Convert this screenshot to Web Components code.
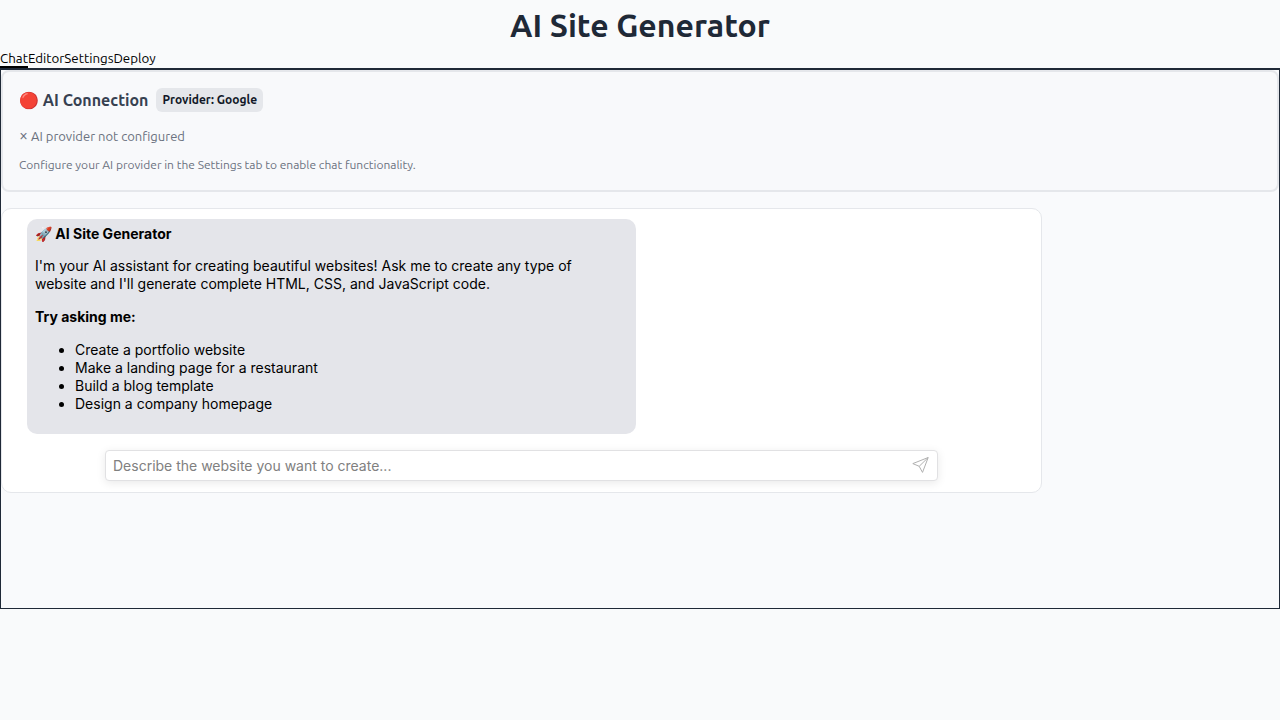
<!DOCTYPE html>
<html lang="en">
<head>
<meta charset="utf-8">
<meta name="viewport" content="width=device-width, initial-scale=1">
<title>AI Site Generator</title>
<style>
  body { margin: 0; background: #f9fafb; color: #1f2937; font-family: Ubuntu, system-ui, "Noto Sans", sans-serif; }
</style>
</head>
<body>
<site-app></site-app>
<script>
const define = (name, html, setup) => {
  const template = document.createElement('template');
  template.innerHTML = html;
  customElements.define(name, class extends HTMLElement {
    constructor() {
      super();
      this.attachShadow({ mode: 'open' }).append(template.content.cloneNode(true));
    }
    connectedCallback() { if (setup) setup(this, this.shadowRoot); }
  });
};

define('app-header', `
<style>
  :host { display: block; text-align: center; }
  h1 { margin: 0; font-size: 32px; line-height: 50px; font-weight: 600; color: #1f2937; }
</style>
<h1><slot></slot></h1>`);

define('tab-bar', `
<style>
  :host { display: block; }
  nav { display: flex; height: 18px; }
</style>
<nav role="tablist" aria-label="Sections"><slot></slot></nav>`);

define('tab-item', `
<style>
  :host { display: flex; }
  button { box-sizing: border-box; margin: 0; padding: 0; border: 0; background: none; font-family: inherit; line-height: 18px; color: #000; cursor: pointer; }
  :host([selected]) button { box-shadow: inset 0 -2px #000; }
</style>
<button type="button" role="tab"><slot></slot></button>`, (host, root) => {
  root.querySelector('button').setAttribute('aria-selected', host.hasAttribute('selected'));
});

define('connection-status', `
<style>
  :host { display: block; box-sizing: border-box; padding: 16px; border: 2px solid #e5e7eb; border-radius: 8px; background: #f8f9fb; color: #6b7280; }
  header { display: flex; align-items: center; gap: 8px; margin-bottom: 12px; }
  h2 { margin: 0; font-size: 16px; line-height: 24px; font-weight: 600; color: #374151; }
  .badge { padding: 0 6px; border-radius: 6px; background: #e5e7eb; color: #111827; font-size: 12px; line-height: 24px; font-weight: 600; }
  p { margin: 0; font-size: 13px; line-height: 24px; }
  .mark { font-size: 16px; line-height: 1; }
  .hint { margin-top: 8px; font-size: 12px; line-height: 18px; }
</style>
<header><h2>🔴 AI Connection</h2><span class="badge"><slot name="provider"></slot></span></header>
<p><span class="mark">×</span> <slot name="status"></slot></p>
<p class="hint"><slot name="hint"></slot></p>`);

define('chat-message', `
<style>
  :host { display: block; box-sizing: border-box; width: 62%; max-width: 609px; padding: 6px 24px 21px 8px; border-radius: 10px; background: #e4e5ea; color: #000; font-size: 14px; line-height: 18px; }
  p { margin: 0 0 15px; }
  p.title { margin-bottom: 14px; }
  b { font-weight: 700; }
  ul { margin: 0; padding-left: 40px; }
</style>
<p class="title"><b>🚀 AI Site Generator</b></p>
<p>I'm your AI assistant for creating beautiful websites! Ask me to create any type of website and I'll generate complete HTML, CSS, and JavaScript code.</p>
<p><b>Try asking me:</b></p>
<ul>
  <li>Create a portfolio website</li>
  <li>Make a landing page for a restaurant</li>
  <li>Build a blog template</li>
  <li>Design a company homepage</li>
</ul>`);

define('chat-input', `
<style>
  :host { display: flex; box-sizing: border-box; align-items: center; padding: 0 8px 0 7px; height: 31px; border: 1px solid #e1e1e3; border-radius: 4px; background: #fff; box-shadow: 0 2px 10px rgba(0, 0, 0, .09); }
  input { flex: 1; min-width: 0; margin: 0; padding: 0; border: 0; outline: 0; background: none; font: inherit; font-size: 14px; line-height: 18px; color: #000; }
  input::placeholder { color: #808080; opacity: 1; }
  button { display: flex; margin: 0; padding: 0; border: 0; background: none; cursor: pointer; }
  svg { display: block; width: 17px; height: 17px; fill: none; stroke: #b0b0b0; stroke-width: 1; stroke-linejoin: round; }
</style>
<input type="text" aria-label="Message" placeholder="Describe the website you want to create...">
<button type="button" aria-label="Send">
  <svg viewBox="0 0 17 17"><path d="M16.2 .5 .8 6.6l6.4 2.7L10.5 15.4zM16.2.5l-9 8.8"/></svg>
</button>`);

define('chat-panel', `
<style>
  :host { display: flex; flex-direction: column; box-sizing: border-box; width: calc(100% - 237px); padding: 10px 0 11px; border: 1px solid #e5e7eb; border-radius: 10px; background: #fff; font-family: Inter, sans-serif; }
  .messages { padding: 0 25px; margin-bottom: 16px; }
  chat-input { margin: 0 103px; }
</style>
<div class="messages"><chat-message></chat-message></div>
<chat-input></chat-input>`);

define('site-app', `
<style>
  :host { display: block; }
  main { box-sizing: border-box; min-height: 541px; border: 1px solid #1f2937; border-top-width: 2px; background: #f9fafc; }
  connection-status { margin-bottom: 16px; }
</style>
<app-header>AI Site Generator</app-header>
<tab-bar>
  <tab-item selected>Chat</tab-item><tab-item>Editor</tab-item><tab-item>Settings</tab-item><tab-item>Deploy</tab-item>
</tab-bar>
<main>
  <connection-status>
    <span slot="provider">Provider: Google</span>
    <span slot="status">AI provider not configured</span>
    <span slot="hint">Configure your AI provider in the Settings tab to enable chat functionality.</span>
  </connection-status>
  <chat-panel></chat-panel>
</main>`);
</script>
</body>
</html>
